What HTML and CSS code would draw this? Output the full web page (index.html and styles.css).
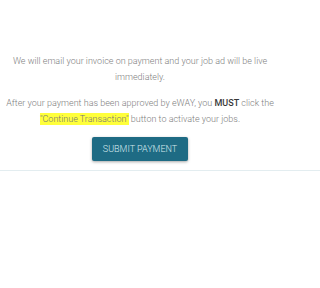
FILE: index.html
```html
<!DOCTYPE html>
<html>
<head>
<meta charset="utf-8">
<link rel="stylesheet" href="styles.css">
</head>
<body>
<div class="panel">
  <p class="note">We will email your invoice on payment and your job ad will be live immediately.</p>
  <p class="note">After your payment has been approved by eWAY, you <strong>MUST</strong> click the <mark>"Continue Transaction"</mark> button to activate your jobs.</p>
  <div class="actions"><button class="submit">SUBMIT PAYMENT</button></div>
</div>
<hr class="rule">
</body>
</html>
```
FILE: styles.css
```css
html, body {
  margin: 0;
  padding: 0;
  background: #ffffff;
}
body {
  font-family: Roboto, "Noto Sans", sans-serif;
  font-weight: 300;
  color: #808080;
}
.panel {
  width: 280px;
  padding: 53px 0 0;
  text-align: center;
}
.note {
  margin: 0 0 10px;
  font-size: 9px;
  line-height: 16px;
}
.note strong {
  font-weight: 500;
  color: #383838;
}
.note mark {
  background: #ffff3b;
  color: #777777;
  padding: 1px 0;
}
.actions {
  display: flex;
  justify-content: center;
}
.submit {
  width: 96px;
  height: 24px;
  border: 0;
  border-radius: 2px;
  background: #1e6b84;
  color: #d5e8ee;
  font-family: Roboto, sans-serif;
  font-weight: 300;
  font-size: 9px;
  padding: 0;
  box-shadow: 0 1px 3px rgba(0,0,0,0.35);
}
.rule {
  margin: 9px 0 0;
  border: 0;
  border-top: 1px solid #e3edf0;
}
```
